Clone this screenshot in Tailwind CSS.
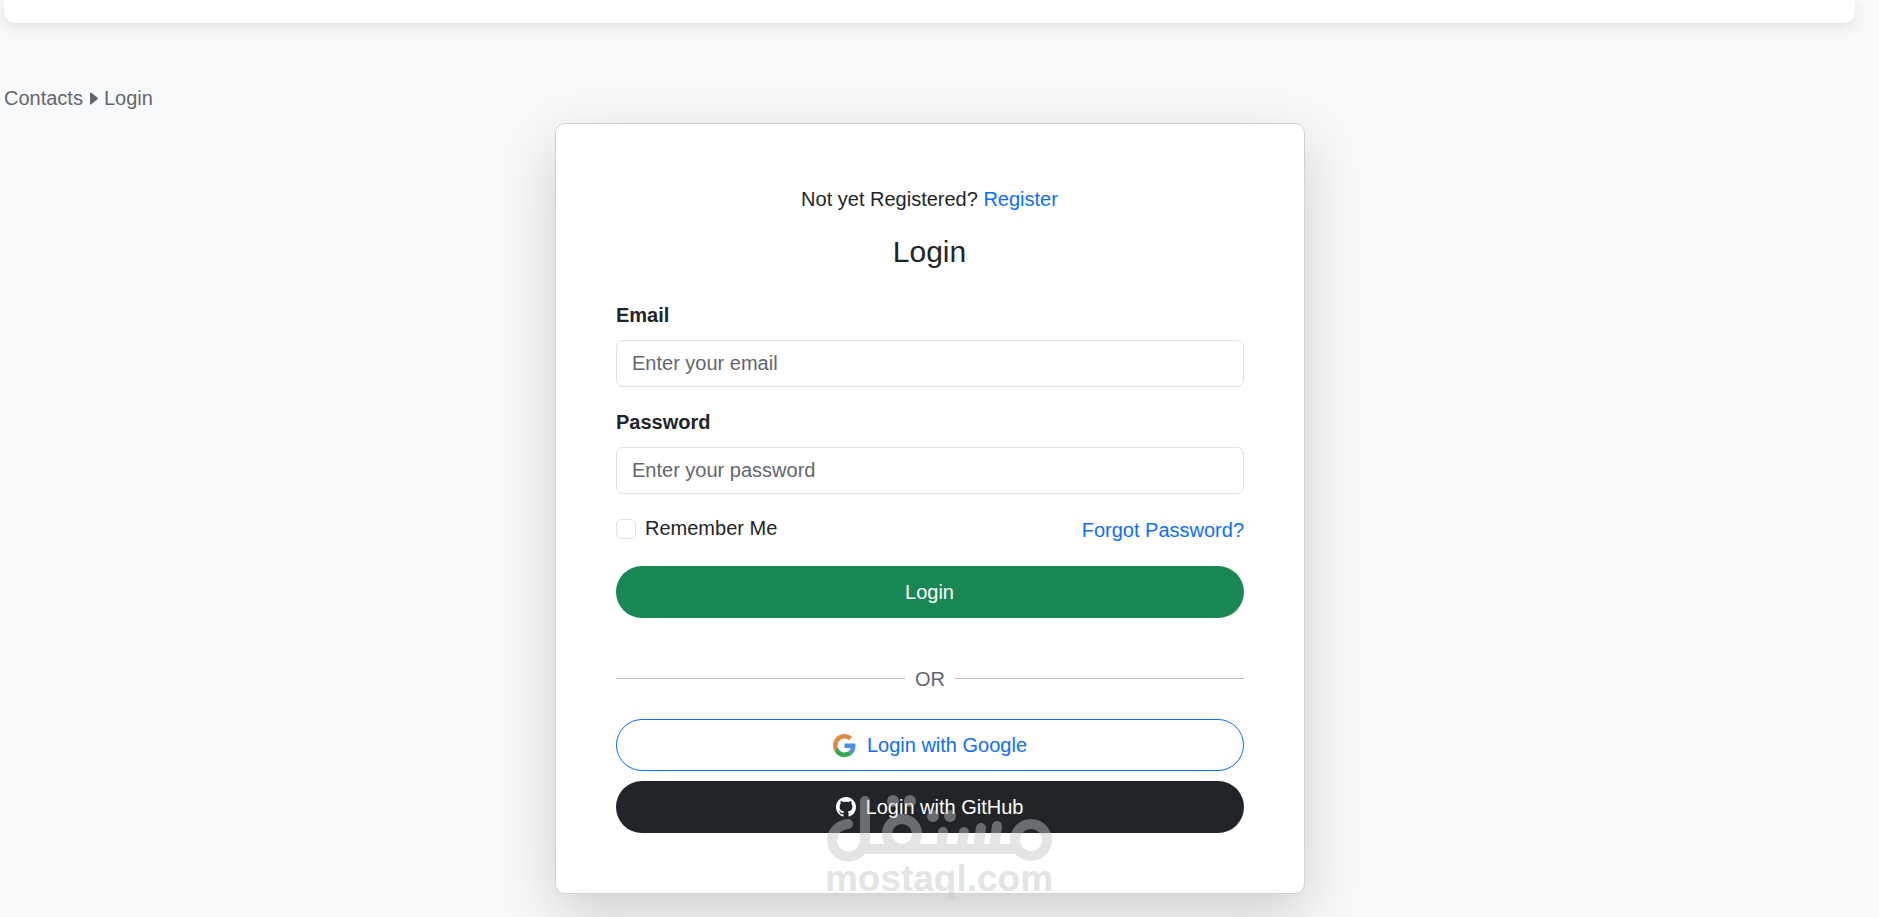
<!DOCTYPE html>
<html lang="en">
<head>
  <meta charset="UTF-8" />
  <meta name="viewport" content="width=device-width, initial-scale=1.0"/>
  <title>Login</title>
  <script src="https://cdn.jsdelivr.net/npm/@tailwindcss/browser@4"></script>
</head>
<body class="bg-[#f8f9fa] h-screen overflow-hidden font-['Liberation_Sans',Arial,sans-serif] text-xl leading-[30px] text-[#212529]">

  <!-- Navbar -->
  <nav class="ml-1 mr-6 h-[23px] bg-white rounded-b-xl shadow-[0_4px_15px_rgba(0,0,0,0.1)]"></nav>

  <!-- Breadcrumb -->
  <div class="mt-15 ml-1 flex items-center text-[#5f686e]">
    <a href="#">Contacts</a>
    <svg class="ml-[7px] mr-[6px] w-2 h-[13px]" viewBox="0 0 8 13" fill="currentColor"><path d="M0 1.2Q0 0 1 .6L7.4 5.6Q8 6.5 7.4 7.2L1 12.4Q0 13 0 11.8Z"/></svg>
    <span>Login</span>
  </div>

  <!-- Login card -->
  <div class="relative mt-[10px] ml-[555px] w-[750px] h-[771px] bg-white border border-[#d0d2d3] rounded-[10px] px-15 pt-15 shadow-[0_20px_60px_rgba(0,0,0,0.175)]">
    <p class="pr-px text-center">Not yet Registered? <a href="#" class="text-[#0d6efd]">Register</a></p>
    <h1 class="mt-5 pr-px text-center text-3xl leading-9">Login</h1>

    <form class="mt-[30px]">
      <label for="email" class="block font-bold">Email</label>
      <input id="email" type="email" placeholder="Enter your email" class="block mt-[10px] w-full h-[47px] px-[15px] border border-[#dee2e6] rounded-[7px] placeholder:text-[#5f686e]" />
      <label for="password" class="block mt-5 font-bold">Password</label>
      <input id="password" type="password" placeholder="Enter your password" class="block mt-[10px] w-full h-[47px] px-[15px] border border-[#dee2e6] rounded-[7px] placeholder:text-[#5f686e]" />

      <div class="mt-[19px] flex items-start justify-between">
        <label class="flex items-center gap-[9px]">
          <input type="checkbox" class="mt-px appearance-none size-5 border border-[#dee2e6] rounded-[5px]" />
          Remember Me
        </label>
        <a href="#" class="pt-[2px] text-[#0d6efd]">Forgot Password?</a>
      </div>

      <button type="button" class="block mt-[21px] w-full h-[52px] pr-px rounded-full bg-[#198754] text-white">Login</button>
    </form>

    <div class="mt-[45px] flex items-center gap-[10px] text-[#5f686e]">
      <div class="flex-1 h-px bg-[#bfc0c1]"></div>
      <span class="-mb-px pt-px">OR</span>
      <div class="flex-1 h-px bg-[#bfc0c1]"></div>
    </div>

    <a href="#" class="mt-[26px] flex items-center justify-center h-[52px] border border-[#0d6efd] rounded-full text-[#0d6efd]">
      <svg class="mr-[11px] size-[23px]" viewBox="0 0 48 48">
        <path fill="#dd8b43" d="M24 9.5c3.54 0 6.71 1.22 9.21 3.6l6.85-6.85C35.9 2.38 30.47 0 24 0 14.62 0 6.51 5.38 2.56 13.22l7.98 6.19C12.43 13.72 17.74 9.5 24 9.5z"/>
        <path fill="#4a90e8" d="M46.98 24.55c0-1.57-.15-3.09-.38-4.55H24v9.02h12.94c-.58 2.96-2.26 5.48-4.78 7.18l7.73 6c4.51-4.18 7.09-10.36 7.09-17.65z"/>
        <path fill="#dd8b43" d="M10.53 28.59A14.5 14.5 0 0 1 9.77 24c0-1.6.27-3.14.76-4.59l-7.98-6.19A23.9 23.9 0 0 0 0 24c0 3.88.92 7.54 2.56 10.78z"/>
        <path fill="#34a853" d="M24 48c6.48 0 11.93-2.13 15.89-5.81l-7.73-6c-2.15 1.45-4.92 2.3-8.16 2.3-6.26 0-11.57-4.22-13.47-9.91l-7.98 6.19C6.51 42.62 14.62 48 24 48z"/>
      </svg>
      Login with Google
    </a>

    <a href="#" class="mt-[10px] flex items-center justify-center h-[52px] pr-px rounded-full bg-[#212529] text-white">
      <svg class="mr-[10px] size-5" viewBox="0 0 16 16" fill="currentColor"><path d="M8 0C3.58 0 0 3.58 0 8c0 3.54 2.29 6.53 5.47 7.59.4.07.55-.17.55-.38 0-.19-.01-.82-.01-1.49-2.01.37-2.53-.49-2.69-.94-.09-.23-.48-.94-.82-1.13-.28-.15-.68-.52-.01-.53.63-.01 1.08.58 1.23.82.72 1.21 1.87.87 2.33.66.07-.52.28-.87.51-1.07-1.78-.2-3.64-.89-3.64-3.95 0-.87.31-1.59.82-2.15-.08-.2-.36-1.02.08-2.12 0 0 .67-.21 2.2.82.64-.18 1.32-.27 2-.27s1.36.09 2 .27c1.53-1.04 2.2-.82 2.2-.82.44 1.1.16 1.92.08 2.12.51.56.82 1.27.82 2.15 0 3.07-1.87 3.75-3.65 3.95.29.25.54.73.54 1.48 0 1.07-.01 1.93-.01 2.2 0 .21.15.46.55.38A8.01 8.01 0 0 0 16 8c0-4.42-3.58-8-8-8z"/></svg>
      Login with GitHub
    </a>

    <!-- Watermark -->
    <svg class="absolute left-[264px] top-[661px] w-[240px] h-[126px] overflow-visible opacity-45 pointer-events-none" viewBox="820 785 240 126">
      <g fill="none" stroke="#c3c4c4" stroke-width="10" stroke-linecap="round" stroke-linejoin="round">
        <path d="M848 824C838 825 832 832 832 840A16.500 16.500 0 0 0 865 840V801M862 849H1017"/>
        <circle cx="902" cy="834" r="15"/>
        <circle cx="1031" cy="840" r="16"/>
        <path d="M941 849L943 832M961 849L964 832M978 849L981 828M994 849L997 826"/>
      </g>
      <g fill="#c3c4c4">
        <circle cx="893" cy="801" r="6"/><circle cx="910" cy="801" r="6"/>
        <circle cx="933" cy="816" r="6"/><circle cx="950" cy="816" r="6"/>
        <text x="825" y="891" textLength="228" lengthAdjust="spacingAndGlyphs" font-size="37" font-weight="700">mostaql.com</text>
      </g>
    </svg>
  </div>

</body>
</html>
